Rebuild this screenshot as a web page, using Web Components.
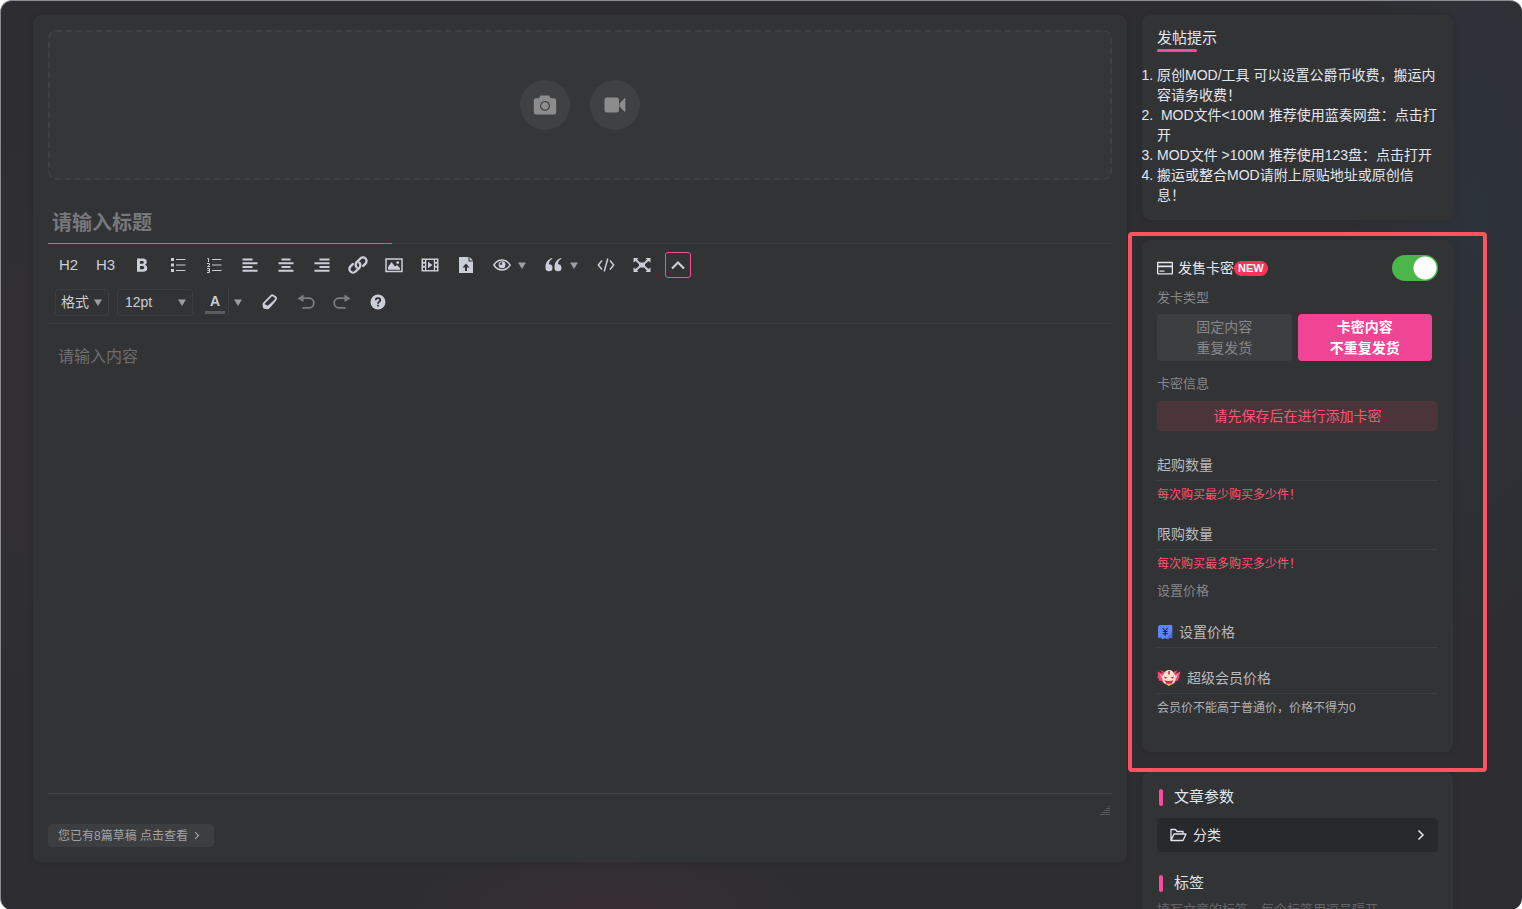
<!DOCTYPE html>
<html lang="zh-CN">
<head>
<meta charset="utf-8">
<meta name="viewport" content="width=device-width, initial-scale=1">
<title>发布文章</title>
<style>
  :root {
    --panel: #323335;
    --line: #3e3f42;
    --pink: #fc4a9c;
    --red: #ff5473;
    --text: #e2e6ee;
    --muted: #86878a;
    --icon: #c9ced8;
  }
  html, body { margin: 0; height: 100%; overflow: hidden; background: #fff; }
  body { font: 14px/20px "Liberation Sans", Arial, "Noto Sans CJK SC", sans-serif; color: var(--text); }
</style>
</head>
<body>
<app-window>
  <post-editor slot="main"></post-editor>
  <tips-card slot="side">
    <li>原创MOD/工具 可以设置公爵币收费，搬运内容请务收费！</li>
    <li>&nbsp;MOD文件&lt;100M 推荐使用蓝奏网盘：点击打开</li>
    <li>MOD文件 &gt;100M 推荐使用123盘：点击打开</li>
    <li>搬运或整合MOD请附上原贴地址或原创信息！</li>
  </tips-card>
  <sell-card slot="side"></sell-card>
  <params-card slot="side"></params-card>
</app-window>

<script>
const ICONS = {
  camera: ['0 0 24 20', '<path fill="currentColor" fill-rule="evenodd" d="M7.500 0.500h8.500l1.800 2.800h3.200a2.200 2.200 0 0 1 2.200 2.200v11.800a2.200 2.200 0 0 1-2.200 2.200h-18a2.200 2.200 0 0 1-2.200-2.200v-11.800a2.200 2.200 0 0 1 2.200-2.200h3zM12 5.900a5 5 0 1 0 .001 0zM12 7.100a3.800 3.800 0 1 1-.001 0z"/>'],
  camcorder: ['0 0 22 16', '<rect x="0.500" y="0.500" width="14.500" height="15" rx="2.500" fill="currentColor"/><path fill="currentColor" d="M15.500 6.500l5-5.200q.9-.5.900.5v12.400q0 1-.9.500l-5-5.200z"/>'],
  bold: ['0 0 16 16', '<path fill="currentColor" fill-rule="evenodd" d="M3 1.500h5.800q4 0 4 3.500 0 2-1.800 2.800 2.300.7 2.300 3.100 0 3.800-4.300 3.800H3zM6 4v2.800h2.300q1.500 0 1.500-1.400T8.300 4zM6 9v3.300h2.600q1.700 0 1.700-1.700T8.600 9z"/>'],
  ul: ['0 0 16 16', '<path fill="currentColor" d="M1 1h3v3H1zM1 6.500h3v3H1zM1 12h3v3H1zM6 2h9.500v1H6zM6 7.500h9.500v1H6zM6 13h9.500v1H6z"/>'],
  ol: ['0 0 16 16', '<path fill="currentColor" d="M6 2h9.500v1H6zM6 7.500h9.500v1H6zM6 13h9.500v1H6z"/><path fill="none" stroke="currentColor" d="M1.300 1.500h1.200V5M1 6.500h2.500V8L1.500 9.500h2.500M1 11.500h2.500v4H1M1.500 13.500h2"/>'],
  left: ['0 0 16 16', '<path fill="currentColor" d="M.5 1.500h10v2h-10zM.5 5.200h15v2h-15zM.5 9h10v2h-10zM.5 12.700h15v2h-15z"/>'],
  center: ['0 0 16 16', '<path fill="currentColor" d="M3.500 1.500h9v2h-9zM.5 5.200h15v2h-15zM3.500 9h9v2h-9zM.5 12.700h15v2h-15z"/>'],
  right: ['0 0 16 16', '<path fill="currentColor" d="M5.500 1.500h10v2h-10zM.5 5.200h15v2h-15zM5.500 9h10v2h-10zM.5 12.700h15v2h-15z"/>'],
  link: ['0 0 20 20', '<g fill="none" stroke="currentColor" stroke-width="2.400" stroke-linecap="round"><path d="M8.700 12.300a3.600 3.600 0 0 1 0-5.100l3.700-3.700a3.600 3.600 0 0 1 5.100 5.100l-2.300 2.300"/><path d="M11.300 7.700a3.600 3.600 0 0 1 0 5.100l-3.700 3.700a3.600 3.600 0 0 1-5.100-5.100l2.300-2.300"/></g>'],
  image: ['0 0 18 16', '<rect x="1" y="2" width="16" height="12.500" fill="none" stroke="currentColor" stroke-width="1.500"/><path fill="currentColor" d="M3 12.800V10l3.500-5 3.500 4.500 2-1.500 3 3v1.800z"/><circle cx="12.700" cy="5.600" r="1.400" fill="currentColor"/>'],
  film: ['0 0 18 16', '<path fill="currentColor" fill-rule="evenodd" d="M.5 1.500h17v13H.5zM2 3v1.800h2V3zM2 6.700v2h2v-2zM2 10.800V13h2v-2.200zM5.300 3v10h7.500V3zM14 3v1.800h2V3zM14 6.700v2h2v-2zM14 10.800V13h2v-2.200z"/><path fill="currentColor" d="M7 4.800l4.500 3.200L7 11.200z"/>'],
  upload: ['0 0 16 18', '<path fill="currentColor" fill-rule="evenodd" d="M1 1h9.500v4.500H15V17H1zM8 7.500L4.500 11.500H7V15h2v-3.500h2.500z"/><path fill="currentColor" d="M11.500 1L15 4.500h-3.500z"/>'],
  eye: ['0 0 18 14', '<path fill="none" stroke="currentColor" stroke-width="1.500" d="M.9 7Q4 2 9 2t8.100 5Q14 12 9 12T.9 7z"/><circle cx="9" cy="6.800" r="3.500" fill="currentColor"/><path d="M9 4.200v2.600H6.800A2.300 2.300 0 0 1 9 4.200z" fill="#323335"/>'],
  quote: ['0 0 18 16', '<path fill="currentColor" d="M7.500 1.800Q4 3.500 3.900 7.300a3.500 3.500 0 1 1-3.400 3.700Q0 3.800 6.500 1zM16.500 1.800Q13 3.500 12.900 7.300a3.500 3.500 0 1 1-3.400 3.700Q9 3.800 15.500 1z"/>'],
  code: ['0 0 18 16', '<path fill="none" stroke="currentColor" stroke-width="1.500" d="M5 3.500L1.300 8 5 12.500M13 3.500L16.700 8 13 12.500M10.800 1.500L7.200 14.500"/>'],
  full: ['0 0 18 16', '<path fill="currentColor" d="M.5 1h5L4 2.500l3 3h4l3-3L12.500 1h5v4.500L15.500 4 12 7v2l3.500 3 2-1.500V15h-5l1.500-1.500-3-3H7l-3 3L5.500 15h-5v-4.500l2 1.500L6 9V7L2.500 4l-2 1.500z"/>'],
  up: ['0 0 16 16', '<path fill="none" stroke="currentColor" stroke-width="2.200" d="M2 11.500l6-6 6 6"/>'],
  caret: ['0 0 8 7', '<path fill="#9c9ea4" d="M0 .5h8L4 7z"/>'],
  eraser: ['0 0 16 16', '<path fill="none" stroke="currentColor" stroke-width="1.800" stroke-linejoin="round" d="M9.300 1.600q.6-.6 1.300-.3l3 1.900q.8.500.4 1.400l-1 1.900L7 13.500q-.7.900-1.700.8l-2.500-.4q-.9-.2-1.100-1.100L1.500 10.500q-.1-.8.500-1.400z"/><path fill="currentColor" d="M1.500 9.500l4.300 2.300L13.500 5v2L6.500 15l-4-.6z"/>'],
  undo: ['0 0 18 16', '<path fill="none" stroke="#7b7e83" stroke-width="1.800" d="M4 4.200h8a4.600 4.600 0 0 1 0 9.600H5.500"/><path fill="#7b7e83" d="M.5 4.500L6.500.5v7.500z"/>'],
  redo: ['0 0 18 16', '<path fill="none" stroke="#7b7e83" stroke-width="1.800" d="M14 4.200H6a4.600 4.600 0 0 0 0 9.600h6.500"/><path fill="#7b7e83" d="M17.500 4.500L11.500.5v7.500z"/>'],
  help: ['0 0 16 16', '<circle cx="8" cy="8" r="7.500" fill="currentColor"/><path fill="none" stroke="#26282b" stroke-width="1.700" d="M5.700 6.300Q5.800 4.200 8 4.200t2.300 1.900Q10.300 7.200 8.900 8 8 8.500 8 9.700M8 10.700v1.800"/>'],
  chevron: ['0 0 8 12', '<path fill="none" stroke="currentColor" stroke-width="1.500" d="M1.500 1.500L6 6l-4.500 4.500"/>'],
  card: ['0 0 16 14', '<path fill="currentColor" fill-rule="evenodd" d="M1 .8h14q1 0 1 1v10.700q0 1-1 1H1q-1 0-1-1V1.800q0-1 1-1zM1.300 2.200v2.300h13.400V2.200zM1.300 6.300v5.900h13.400V6.300z"/><path fill="currentColor" d="M2.500 9.500h5v1.200h-5z"/>'],
  price: ['0 0 16 16', '<path fill="#5c86f7" d="M3.500 1h11q.8 0 .8 1v12.500l-2.300-1-2.300 1.700-2.500-1.200-2.500 1.200L3.300 13.500l-2.300.7V3q0-2 2.500-2z"/><path fill="#486be0" d="M9 15l6-7v6l-2.300-.8z"/><path fill="none" stroke="#192b63" stroke-width="1.100" d="M5.700 4L8.200 7l2.500-3M8.200 7v5M5.700 7.500h5M5.700 9.600h5"/>'],
  vip: ['0 0 24 18', '<path fill="#f2476f" d="M.5 2.500l5 2L3.500 1 9 3.500h6L20.500 1l-2 3.500 5-2-1.500 5 1 .5-2 2 .5 1.500-3 .5-1 2.500h-11l-2-2.500-3-.5.500-1.500-2-2 1-.5z"/><path fill="#ffb3bd" d="M2.500 4.500l3.500 3-1 2zM21.500 4.500l-3.500 3 1 2z"/><path fill="#ffe3cf" d="M8.500 2.200Q12-.3 15.500 2.200L19 7.500q0 8-7 8t-7-8z"/><path fill="#d0284f" d="M11.200 2h1.600v3.500h-1.600zM7 7.300l3.500 1.500L8 9.800zM17 7.300l-3.500 1.500 2.500 1zM7.500 11.300q4.500 1.500 9 0l-2 3.500h-5z"/><path fill="#f6b545" d="M8.500 15h7L12 17z"/>'],
  folder: ['0 0 17 14', '<path fill="none" stroke="currentColor" stroke-width="1.300" stroke-linejoin="round" d="M1 12.500V1.500h4.500l1.500 2h6v2.300M1 12.500l3-6.500h12l-3 6.500z"/>'],
  grip: ['0 0 10 10', '<path fill="#56575a" d="M8 0h2v1H8zM6 2h4v1H6zM4 4h6v1H4zM2 6h8v1H2zM0 8h10v1H0z"/>']
};

const BASE = `<style>
  *, *::before, *::after { box-sizing: border-box; }
  :host { display: block; }
  :host([hidden]) { display: none; }
  button, input, textarea, select { font: inherit; color: inherit; background: none; border: 0; padding: 0; margin: 0; outline: 0; border-radius: 0; }
  h2, h3, p, ol { margin: 0; font-weight: 400; }
</style>`;

function define(name, html, setup) {
  const tpl = document.createElement('template');
  tpl.innerHTML = BASE + html;
  customElements.define(name, class extends HTMLElement {
    constructor() {
      super();
      this.attachShadow({ mode: 'open' }).append(tpl.content.cloneNode(true));
    }
    connectedCallback() { if (setup) setup(this, this.shadowRoot); }
  });
}

define('ui-icon', `<style>
  :host { display: inline-flex; flex: none; }
  svg { display: block; }
</style><svg aria-hidden="true"></svg>`, (el, root) => {
  const [box, body] = ICONS[el.getAttribute('name')];
  const svg = root.querySelector('svg');
  const [, , w, h] = box.split(' ');
  svg.setAttribute('viewBox', box);
  svg.setAttribute('width', el.getAttribute('w') || w);
  svg.setAttribute('height', el.getAttribute('h') || h);
  svg.innerHTML = body;
});

define('app-window', `<style>
  :host {
    height: 100vh; overflow: hidden; border-radius: 12px;
    border-top: 1px solid #8b8c90; border-left: 1px solid #8b8c90;
    background:
      radial-gradient(ellipse 200px 70px at 40% 100%, #382e34 0, transparent 100%),
      radial-gradient(ellipse 130px 420px at 97% 24%, #2d333b 0, transparent 100%),
      radial-gradient(ellipse 160px 300px at 0 45%, #322f34 0, transparent 100%),
      #2e2e32;
  }
  .layout { display: grid; grid-template-columns: minmax(0, 1fr) 311px; align-items: start; gap: 15px; padding: 14px 69px 0 32px; }
  .side { display: flex; flex-direction: column; gap: 20px; }
</style>
<div class="layout"><main><slot name="main"></slot></main><aside class="side"><slot name="side"></slot></aside></div>`);

define('ui-card', `<style>
  :host { background: var(--panel); border-radius: 8px; padding: 15px; box-shadow: 0 0 6px #00000018; }
</style><slot></slot>`);

define('cover-upload', `<style>
  :host { display: flex; align-items: center; justify-content: center; gap: 20px; height: 150px; border: 2px dashed #3f4043; border-radius: 8px; background: #353638; }
  button { display: flex; align-items: center; justify-content: center; width: 50px; height: 50px; border-radius: 50%; background: #404143; color: #8c8c8d; }
</style>
<button type="button" aria-label="图片"><ui-icon name="camera"></ui-icon></button>
<button type="button" aria-label="视频"><ui-icon name="camcorder"></ui-icon></button>`);

define('tool-button', `<style>
  :host { display: flex; align-items: center; width: 36px; height: 36px; justify-content: center; color: var(--icon); }
  :host([wide]) { width: 37px; }
  :host([menu]) { width: 52px; }
  button { display: flex; align-items: center; justify-content: center; gap: 7px; width: 26px; height: 26px; font-size: 15px; }
  :host([menu]) button { width: 44px; padding-left: 5px; justify-content: flex-start; }
  :host([active]) button { border: 1px solid var(--pink); border-radius: 3px; }
</style>
<button type="button"><slot></slot></button>`, (el, root) => {
  const label = el.getAttribute('label');
  if (label) root.querySelector('button').setAttribute('aria-label', label);
  const icon = el.getAttribute('icon');
  if (icon && !el.firstChild) {
    el.innerHTML = `<ui-icon name="${icon}"></ui-icon>` + (el.hasAttribute('menu') ? '<ui-icon name="caret"></ui-icon>' : '');
  }
});

define('tool-select', `<style>
  :host { display: grid; align-items: center; height: 27px; border: 1px solid #3d3e41; border-radius: 3px; color: var(--icon); }
  select, ui-icon { grid-area: 1 / 1; }
  select { appearance: none; width: 100%; height: 25px; padding: 0 5px; }
  :host([roomy]) select { padding: 0 7px; }
  ui-icon { justify-self: end; margin-right: 6px; pointer-events: none; }
</style>
<select><option></option></select><ui-icon name="caret"></ui-icon>`, (el, root) => {
  root.querySelector('select').setAttribute('aria-label', el.getAttribute('label'));
  root.querySelector('option').textContent = el.getAttribute('value');
});

define('editor-toolbar', `<style>
  :host { display: flex; flex-direction: column; gap: 1px; padding: 3px 0 3px 2px; border-bottom: 1px solid var(--line); }
  .row { display: flex; align-items: center; height: 36px; }
  .second { padding-left: 5px; }
  .format { width: 54px; margin-right: 8px; }
  .size { width: 76px; margin-right: 5px; }
  .color { display: flex; height: 27px; color: var(--icon); }
  .color button { display: flex; align-items: center; justify-content: center; }
  .color .letter { width: 31px; padding-left: 4px; border-right: 1px solid var(--line); }
  .letter span { width: 20px; border-bottom: 3px solid #5b5c60; font-weight: 700; line-height: 20px; }
  .arrow { width: 18px; margin-right: 5px; }
</style>
<div class="row">
  <tool-button wide>H2</tool-button><tool-button wide>H3</tool-button>
  <tool-button icon="bold" label="粗体"></tool-button>
  <tool-button icon="ul" label="项目符号列表"></tool-button>
  <tool-button icon="ol" label="编号列表"></tool-button>
  <tool-button icon="left" label="左对齐"></tool-button>
  <tool-button icon="center" label="居中对齐"></tool-button>
  <tool-button icon="right" label="右对齐"></tool-button>
  <tool-button icon="link" label="链接"></tool-button>
  <tool-button icon="image" label="插入图片"></tool-button>
  <tool-button icon="film" label="插入视频"></tool-button>
  <tool-button icon="upload" label="上传附件"></tool-button>
  <tool-button icon="eye" label="隐藏内容" menu></tool-button>
  <tool-button icon="quote" label="引用" menu></tool-button>
  <tool-button icon="code" label="代码"></tool-button>
  <tool-button icon="full" label="全屏"></tool-button>
  <tool-button icon="up" label="收起工具栏" active></tool-button>
</div>
<div class="row second">
  <tool-select class="format" label="段落格式" value="格式"></tool-select>
  <tool-select class="size" label="字号" value="12pt" roomy></tool-select>
  <div class="color">
    <button type="button" class="letter"><span>A</span></button>
    <button type="button" class="arrow" aria-label="选择文字颜色"><ui-icon name="caret"></ui-icon></button>
  </div>
  <tool-button icon="eraser" label="清除格式"></tool-button>
  <tool-button icon="undo" label="撤销"></tool-button>
  <tool-button icon="redo" label="重做"></tool-button>
  <tool-button icon="help" label="帮助"></tool-button>
</div>`);

define('post-editor', `<style>
  input, textarea { display: block; width: 100%; }
  .title { height: 64px; padding: 22px 4px 0; font-size: 20px; font-weight: 700;
    background: linear-gradient(var(--pink), var(--pink)) 0 100% / 344px 1px no-repeat, linear-gradient(var(--line), var(--line)) 0 100% / 100% 1px no-repeat; }
  .title::placeholder { color: #77787b; opacity: 1; }
  .body { height: 470px; padding: 21px 10px; resize: none; font-size: 16px; line-height: 24px; border-bottom: 1px solid #444548; }
  .body::placeholder { color: #6d6e71; opacity: 1; }
  .status { display: flex; justify-content: flex-end; height: 30px; padding: 12px 2px; }
  .drafts { display: inline-flex; align-items: center; gap: 6px; height: 23px; padding: 0 14px 0 10px; border-radius: 4px; background: #3d3e40; color: #a1a2a4; font-size: 12px; line-height: 20px; }
  .foot { display: flex; }
</style>
<ui-card>
  <cover-upload></cover-upload>
  <input class="title" type="text" placeholder="请输入标题" aria-label="标题">
  <editor-toolbar></editor-toolbar>
  <textarea class="body" placeholder="请输入内容" aria-label="内容"></textarea>
  <div class="status"><ui-icon name="grip"></ui-icon></div>
  <div class="foot"><button type="button" class="drafts">您已有8篇草稿 点击查看<ui-icon name="chevron" w="6" h="9"></ui-icon></button></div>
</ui-card>`);

define('tips-card', `<style>
  h2 { width: fit-content; font-size: 15px; line-height: 16px; }
  h2::after { content: ""; display: block; width: 40px; height: 3px; margin-top: 3px; border-radius: 2px; background: var(--pink); }
  ol { padding: 0; margin-top: 13px; }
</style>
<ui-card><h2>发帖提示</h2><ol><slot></slot></ol></ui-card>`);

define('form-field', `<style>
  label { display: flex; align-items: center; height: 31px; border-bottom: 1px solid var(--line); }
  ui-icon { margin-right: 6px; }
  input { flex: 1; min-width: 0; height: 30px; }
  input::placeholder { color: #b8babf; opacity: 1; }
  p { font-size: 12px; line-height: 18px; padding-top: 5px; color: var(--hint, var(--red)); }
  p:empty { display: none; }
</style>
<label><input type="text"></label><p></p>`, (el, root) => {
  const input = root.querySelector('input');
  input.placeholder = el.getAttribute('label');
  input.setAttribute('aria-label', input.placeholder);
  root.querySelector('p').textContent = el.getAttribute('hint') || '';
  const icon = el.getAttribute('icon');
  if (icon && !root.querySelector('ui-icon')) {
    const node = document.createElement('ui-icon');
    node.setAttribute('name', icon);
    input.before(node);
  }
});

define('sell-card', `<style>
  :host { position: relative; }
  .marker { position: absolute; inset: -8px -34px -20px -14px; border: 4px solid #ff5361; border-radius: 4px; pointer-events: none; }
  .head { display: flex; align-items: center; height: 26px; margin-bottom: 7px; }
  .head h2 { margin-left: 5px; font-size: 14px; }
  .badge { padding: 0 4px; border-radius: 8px; background: #ff3158; color: #fff; font-size: 11px; font-weight: 700; line-height: 15px; }
  .switch { appearance: none; width: 46px; height: 26px; margin-left: auto; border-radius: 13px; background: radial-gradient(circle at 33px 13px, #fff 11px, transparent 12px), #4bb748; }
  .label { font-size: 13px; color: var(--muted); }
  .types { display: grid; grid-template-columns: 1fr 1fr; gap: 6px; margin: 6px 6px 13px 0; }
  .types button { height: 47px; border-radius: 4px; background: #3d3e40; color: var(--muted); line-height: 21px; }
  .types .on { background: #f04494; color: #fff; font-weight: 700; }
  .notice { margin-top: 7px; border-radius: 4px; background: #49353a; color: var(--red); line-height: 30px; text-align: center; }
  .fields { display: flex; flex-direction: column; gap: 15px; margin: 19px 0 8px; }
  .prices { display: flex; flex-direction: column; gap: 15px; margin: 16px 0 20px; }
  .prices form-field { --hint: #b0b1b4; }
</style>
<ui-card>
  <div class="head">
    <ui-icon name="card"></ui-icon><h2 id="sell">发售卡密</h2><span class="badge">NEW</span>
    <input class="switch" type="checkbox" role="switch" aria-labelledby="sell" checked>
  </div>
  <p class="label">发卡类型</p>
  <div class="types">
    <button type="button">固定内容<br>重复发货</button>
    <button type="button" class="on">卡密内容<br>不重复发货</button>
  </div>
  <p class="label">卡密信息</p>
  <p class="notice">请先保存后在进行添加卡密</p>
  <div class="fields">
    <form-field label="起购数量" hint="每次购买最少购买多少件！"></form-field>
    <form-field label="限购数量" hint="每次购买最多购买多少件！"></form-field>
  </div>
  <p class="label">设置价格</p>
  <div class="prices">
    <form-field icon="price" label="设置价格"></form-field>
    <form-field icon="vip" label="超级会员价格" hint="会员价不能高于普通价，价格不得为0"></form-field>
  </div>
</ui-card>
<div class="marker"></div>`);

define('params-card', `<style>
  h3 { display: flex; align-items: center; gap: 11px; padding-left: 2px; font-size: 15px; line-height: 20px; }
  h3::before { content: ""; width: 4px; height: 17px; border-radius: 2px; background: var(--pink); }
  .category { display: flex; align-items: center; gap: 6px; width: 100%; height: 34px; margin: 11px 0 21px; padding: 0 13px; border-radius: 4px; background: #28292c; }
  .category .go { margin-left: auto; }
  textarea { display: block; width: 100%; height: 60px; margin-top: 7px; resize: none; font-size: 13px; line-height: 20px; }
  textarea::placeholder { color: #65666a; opacity: 1; }
</style>
<ui-card>
  <h3>文章参数</h3>
  <button type="button" class="category"><ui-icon name="folder"></ui-icon>分类<ui-icon class="go" name="chevron"></ui-icon></button>
  <h3>标签</h3>
  <textarea placeholder="填写文章的标签，每个标签用逗号隔开" aria-label="标签"></textarea>
</ui-card>`);
</script>
</body>
</html>
